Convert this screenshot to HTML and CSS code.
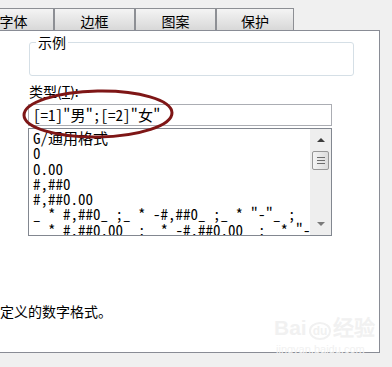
FILE: index.html
```html
<!DOCTYPE html>
<html lang="zh-CN">
<head>
  <meta charset="UTF-8" />
  <title>设置单元格格式</title>
  <link rel="stylesheet" href="styles.css">
</head>
<body>
<div class="dialog">
  <div class="tabs">
    <div class="tab">字体</div>
    <div class="tab">边框</div>
    <div class="tab">图案</div>
    <div class="tab tab-last">保护</div>
  </div>
  <div class="panel">
    <fieldset class="sample">
      <legend>示例</legend>
      <div class="sample-box"></div>
    </fieldset>
    <label class="type-label">类型(<u>T</u>):</label>
    <div class="type-input mono">[=1]"男";[=2]"女"</div>
    <div class="list">
      <div class="list-items mono">
        <div>G/通用格式</div>
        <div>0</div>
        <div>0.00</div>
        <div>#,##0</div>
        <div>#,##0.00</div>
        <div>_ * #,##0_ ;_ * -#,##0_ ;_ * "-"_ ;</div>
        <div>_ * #,##0.00_ ;_ * -#,##0.00_ ;_ * "-"??_ ;</div>
      </div>
      <div class="scrollbar">
        <div class="arrow-up"></div>
        <div class="thumb"><span></span><span></span><span></span></div>
        <div class="track"></div>
        <div class="arrow-down"></div>
      </div>
    </div>
    <p class="hint">以现有格式为基础，生成自定义的数字格式。</p>
  </div>
</div>

<!-- 红圈标注 -->
<svg class="mark" width="392" height="367" viewBox="0 0 392 367">
  <ellipse cx="98" cy="114" rx="74" ry="23" fill="none" stroke="#7e1616" stroke-width="3" transform="rotate(-1 98 114)"/>
</svg>

<div class="watermark">
  <div class="wm-logo">Bai<span class="wm-du">du</span>经验</div>
  <div class="wm-url">jingyan.baidu.com</div>
</div>
</body>
</html>
```

FILE: styles.css
```css
body {
  margin: 0;
  height: 367px;
  background: #f0f0f0;
  overflow: hidden;
  position: relative;
  font-family: "Noto Sans CJK SC", "Noto Sans", sans-serif;
  font-size: 14px;
  color: #000;
}
.mono {
  font-family: "Noto Sans Mono CJK SC", "Liberation Mono", "Noto Sans CJK SC", monospace;
  font-size: 15px;
}
.tabs {
  display: flex;
  padding-top: 8px;
  margin-left: -27px;
}
.tab {
  width: 81px;
  height: 22px;
  box-sizing: border-box;
  border: 1px solid #8d8f94;
  border-bottom: none;
  background: linear-gradient(#f4f4f4, #d8d8d8);
  display: flex;
  align-items: center;
  justify-content: center;
  line-height: 1;
  padding-top: 3px;
}
.tab-last { width: 78px; }
.panel {
  margin-left: -10px;
  width: 390px;
  height: 323px;
  box-sizing: border-box;
  border: 1px solid #898c95;
  background: #fff;
  padding-left: 37px;
}
.sample {
  margin: 4px 0 0 1px;
  width: 325px;
  box-sizing: border-box;
  padding: 0 6px;
  border: 1px solid #d5dfe6;
  border-radius: 3px;
}
.sample legend {
  padding: 0 2px;
  line-height: 15px;
}
.sample-box { height: 25px; }
.type-label {
  display: block;
  margin-top: 8px;
  padding-left: 1px;
  line-height: 15px;
}
.type-input {
  margin-top: 5px;
  width: 304px;
  height: 22px;
  box-sizing: border-box;
  border: 1px solid #abadb3;
  padding-left: 4px;
  line-height: 20px;
  white-space: nowrap;
}
.list {
  margin-top: 2px;
  width: 304px;
  height: 108px;
  box-sizing: border-box;
  border: 1px solid #828790;
  display: flex;
}
.list-items {
  flex: 1;
  padding: 1px 0 0 4px;
  line-height: 15.3px;
  white-space: nowrap;
  overflow: hidden;
}
.scrollbar {
  width: 21px;
  background: #eeeeee;
  display: flex;
  flex-direction: column;
  align-items: center;
}
.arrow-up, .arrow-down {
  width: 0;
  height: 0;
  border-left: 4px solid transparent;
  border-right: 4px solid transparent;
}
.arrow-up {
  margin-top: 9px;
  border-bottom: 4px solid #3c3c3c;
}
.arrow-down {
  margin-bottom: 9px;
  border-top: 4px solid #7a7a7a;
}
.thumb {
  margin-top: 9px;
  width: 17px;
  height: 19px;
  box-sizing: border-box;
  border: 1px solid #979797;
  border-radius: 2px;
  background: linear-gradient(90deg, #f4f4f4, #dcdcdc);
  display: flex;
  flex-direction: column;
  align-items: center;
  justify-content: center;
  gap: 2px;
}
.thumb span {
  width: 8px;
  height: 1px;
  background: #6d6d6d;
}
.track { flex: 1; }
.hint {
  margin: 67px 0 0 -196px;
  line-height: 16px;
  white-space: nowrap;
}
.mark {
  position: absolute;
  top: 0;
  left: 0;
  pointer-events: none;
}
.watermark {
  position: absolute;
  left: 274px;
  top: 316px;
  color: #f1f1f1;
  font-family: "Liberation Sans", Arial, sans-serif;
}
.wm-logo {
  font-size: 21px;
  font-weight: bold;
  line-height: 24px;
  white-space: nowrap;
}
.wm-du {
  font-size: 12px;
  border: 2px solid #f1f1f1;
  border-radius: 50%;
  padding: 0 2px;
  margin: 0 2px;
}
.wm-url {
  font-size: 11px;
  line-height: 12px;
  padding-left: 2px;
}
```
